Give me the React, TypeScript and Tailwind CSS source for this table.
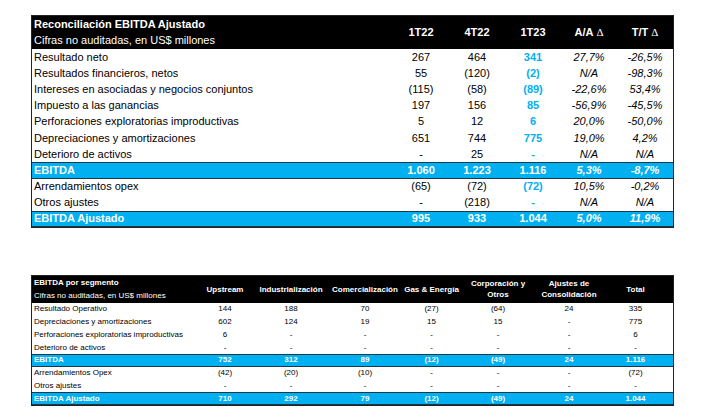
const BLUE = 'bg-[#00b0f0]';

type TopRow = { label: string; v: string[]; band?: boolean };

const topRows: TopRow[] = [
  { label: 'Resultado neto', v: ['267', '464', '341', '27,7%', '-26,5%'] },
  { label: 'Resultados financieros, netos', v: ['55', '(120)', '(2)', 'N/A', '-98,3%'] },
  { label: 'Intereses en asociadas y negocios conjuntos', v: ['(115)', '(58)', '(89)', '-22,6%', '53,4%'] },
  { label: 'Impuesto a las ganancias', v: ['197', '156', '85', '-56,9%', '-45,5%'] },
  { label: 'Perforaciones exploratorias improductivas', v: ['5', '12', '6', '20,0%', '-50,0%'] },
  { label: 'Depreciaciones y amortizaciones', v: ['651', '744', '775', '19,0%', '4,2%'] },
  { label: 'Deterioro de activos', v: ['-', '25', '-', 'N/A', 'N/A'] },
  { label: 'EBITDA', v: ['1.060', '1.223', '1.116', '5,3%', '-8,7%'], band: true },
  { label: 'Arrendamientos opex', v: ['(65)', '(72)', '(72)', '10,5%', '-0,2%'] },
  { label: 'Otros ajustes', v: ['-', '(218)', '-', 'N/A', 'N/A'] },
  { label: 'EBITDA Ajustado', v: ['995', '933', '1.044', '5,0%', '11,9%'], band: true },
];

const segRows: TopRow[] = [
  { label: 'Resultado Operativo', v: ['144', '188', '70', '(27)', '(64)', '24', '335'] },
  { label: 'Depreciaciones y amortizaciones', v: ['602', '124', '19', '15', '15', '-', '775'] },
  { label: 'Perforaciones exploratorias improductivas', v: ['6', '-', '-', '-', '-', '-', '6'] },
  { label: 'Deterioro de activos', v: ['-', '-', '-', '-', '-', '-', '-'] },
  { label: 'EBITDA', v: ['752', '312', '89', '(12)', '(49)', '24', '1.116'], band: true },
  { label: 'Arrendamientos Opex', v: ['(42)', '(20)', '(10)', '-', '-', '-', '(72)'] },
  { label: 'Otros ajustes', v: ['-', '-', '-', '-', '-', '-', '-'] },
  { label: 'EBITDA Ajustado', v: ['710', '292', '79', '(12)', '(49)', '24', '1.044'], band: true },
];

const segCols = ['w-[64px]', 'w-[68px]', 'w-[80px]', 'w-[53px]', 'w-[80px]', 'w-[62px]', 'w-[71px]'];

function TopTable() {
  return (
    <div className="ml-[31px] mt-[15px] w-[643px] border border-[#222] text-[11px] leading-none">
      <div className="flex h-[33px] bg-black text-white">
        <div className="w-[361px] pl-[2px] flex flex-col justify-center gap-[5px]">
          <div className="font-bold">Reconciliación EBITDA Ajustado</div>
          <div>Cifras no auditadas, en US$ millones</div>
        </div>
        {['1T22', '4T22', '1T23'].map((h) => (
          <div key={h} className="w-[56px] flex items-center justify-center font-bold">{h}</div>
        ))}
        <div className="w-[56px] flex items-center justify-center font-bold">
          A/A <span className="ml-[3px] font-normal font-['Liberation_Serif',serif]">Δ</span>
        </div>
        <div className="w-[56px] flex items-center justify-center font-bold">
          T/T <span className="ml-[3px] font-normal font-['Liberation_Serif',serif]">Δ</span>
        </div>
      </div>
      {topRows.map((r) => (
        <div
          key={r.label}
          className={
            r.band
              ? `flex h-[16.2px] items-center ${BLUE} text-white font-bold border-y border-[#1a3a4a]`
              : 'flex h-[16.2px] items-center text-black'
          }
        >
          <div className="w-[361px] pl-[2px]">{r.label}</div>
          {r.v.map((x, i) => (
            <div
              key={i}
              className={
                'w-[56px] text-center ' +
                (i === 2 && !r.band ? 'text-[#00b0f0] font-bold ' : '') +
                (i >= 3 ? 'italic ' : '')
              }
            >
              {x}
            </div>
          ))}
        </div>
      ))}
    </div>
  );
}

function SegTable() {
  return (
    <div className="ml-[31px] mt-[47px] w-[643px] border border-[#222] text-[8px] leading-none">
      <div className="flex h-[27px] bg-black text-white font-bold">
        <div className="w-[161px] pl-[2px] flex flex-col justify-center gap-[5px]">
          <div>EBITDA por segmento</div>
          <div className="font-normal">Cifras no auditadas, en US$ millones</div>
        </div>
        {['Upstream', 'Industrialización', 'Comercialización', 'Gas & Energía'].map((h, i) => (
          <div key={h} className={`${segCols[i]} flex items-center justify-center text-center whitespace-nowrap`}>{h}</div>
        ))}
        <div className={`${segCols[4]} flex flex-col items-center justify-center text-center gap-[3px]`}>
          <div>Corporación y</div>
          <div>Otros</div>
        </div>
        <div className={`${segCols[5]} flex flex-col items-center justify-center text-center gap-[3px]`}>
          <div>Ajustes de</div>
          <div>Consolidación</div>
        </div>
        <div className={`${segCols[6]} flex items-center justify-center`}>Total</div>
      </div>
      {segRows.map((r) => (
        <div
          key={r.label}
          className={
            r.band
              ? `flex h-[12.75px] items-center ${BLUE} text-white font-bold border-y border-[#1a3a4a]`
              : 'flex h-[12.75px] items-center text-black'
          }
        >
          <div className="w-[161px] pl-[2px] whitespace-nowrap">{r.label}</div>
          {r.v.map((x, i) => (
            <div key={i} className={`${segCols[i]} text-center`}>{x}</div>
          ))}
        </div>
      ))}
    </div>
  );
}

export default function App() {
  return (
    <div className="w-[701px] h-[418px] bg-white overflow-hidden font-['Liberation_Sans',Arial,sans-serif]">
      <TopTable />
      <SegTable />
    </div>
  );
}
